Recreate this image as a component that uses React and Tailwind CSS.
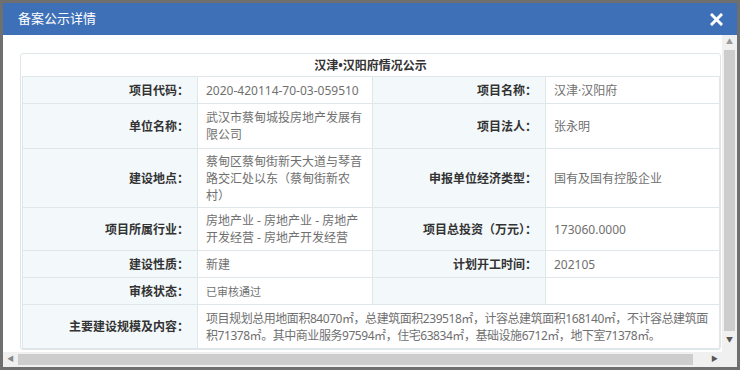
import React from 'react';

const rows = [
  { h: 'h-[27px]', l1: '项目代码：', v1: '2020-420114-70-03-059510', l2: '项目名称：', v2: '汉津·汉阳府' },
  { h: 'h-[45px]', l1: '单位名称：', v1: '武汉市蔡甸城投房地产发展有限公司', l2: '项目法人：', v2: '张永明' },
  { h: 'h-[59px]', l1: '建设地点：', v1: '蔡甸区蔡甸街新天大道与琴音路交汇处以东（蔡甸街新农村）', l2: '申报单位经济类型：', v2: '国有及国有控股企业' },
  { h: 'h-[43px]', l1: '项目所属行业：', v1: '房地产业 - 房地产业 - 房地产开发经营 - 房地产开发经营', l2: '项目总投资（万元）：', v2: '173060.0000' },
  { h: 'h-[27px]', l1: '建设性质：', v1: '新建', l2: '计划开工时间：', v2: '202105' },
  { h: 'h-[27px]', l1: '审核状态：', v1: '已审核通过', small: true, l2: '', v2: '' },
];

const label = 'border border-[#dfe7eb] bg-[#f3f9fb] text-right align-middle pr-[8px] pl-[6px] font-bold text-[#333]';
const value = 'border border-[#dfe7eb] bg-white text-left align-middle pl-[8px] pr-[6px] text-[#707070]';

export default function App() {
  return (
    <div
      className="w-[740px] h-[370px] bg-[#6f6f6f] p-[3px] overflow-hidden"
      style={{ fontFamily: '"Noto Sans", "Noto Sans CJK SC", sans-serif' }}
    >
      <div className="h-[364px] bg-white flex flex-col">
        {/* dialog header */}
        <div className="h-[32px] bg-[#3e70b7] flex items-center justify-between pl-[15px] pr-[14px]">
          <span className="text-white text-[13px]">备案公示详情</span>
          <svg width="13" height="13" viewBox="0 0 13 13">
            <path d="M2 2 L11 11 M11 2 L2 11" stroke="#fff" strokeWidth="3" strokeLinecap="square" />
          </svg>
        </div>

        <div className="flex flex-1">
          <div className="flex-1 flex flex-col">
            <div className="h-[317px] pl-[17px] pt-[18px] pr-[1px] overflow-hidden">
              <div className="w-[701px] border border-[#dfe6ea] rounded-[3px] bg-white text-[12px] leading-[17px]">
                <div className="h-[22px] flex items-center justify-center font-bold text-[#333]">
                  汉津•汉阳府情况公示
                </div>
                <table className="mx-[1px] w-[697px] border-collapse table-fixed">
                  <colgroup>
                    <col className="w-[175px]" />
                    <col className="w-[175px]" />
                    <col className="w-[173px]" />
                    <col className="w-[174px]" />
                  </colgroup>
                  <tbody>
                    {rows.map((r) => (
                      <tr key={r.l1} className={r.h}>
                        <td className={label}>{r.l1}</td>
                        <td className={value}>
                          <span className={r.small ? 'text-[11px]' : ''}>{r.v1}</span>
                        </td>
                        <td className={label}>{r.l2}</td>
                        <td className={value}>{r.v2}</td>
                      </tr>
                    ))}
                    <tr className="h-[44px]">
                      <td className={label}>主要建设规模及内容：</td>
                      <td className={value + ' tracking-[-0.45px]'} colSpan={3}>
                        项目规划总用地面积84070㎡，总建筑面积239518㎡，计容总建筑面积168140㎡，不计容总建筑面积71378㎡。其中商业服务97594㎡，住宅63834㎡，基础设施6712㎡，地下室71378㎡。
                      </td>
                    </tr>
                  </tbody>
                </table>
              </div>
            </div>

            {/* horizontal scrollbar */}
            <div className="h-[15px] bg-[#f0f0f0] flex items-center">
              <div className="w-[15px] flex items-center justify-center text-[#888] text-[7px]">◀</div>
              <div className="h-[11px] w-[675px] bg-[#cdcdcd]" />
              <div className="flex-1" />
              <div className="w-[15px] flex items-center justify-center text-[#555] text-[7px]">▶</div>
            </div>
          </div>

          {/* vertical scrollbar */}
          <div className="w-[15px] bg-[#f0f0f0] flex flex-col items-center">
            <div className="h-[15px] flex items-center justify-center text-[#999] text-[7px]">▲</div>
            <div className="w-[11px] h-[281px] bg-[#cdcdcd]" />
            <div className="h-[15px] mt-[2px] flex items-center justify-center text-[#555] text-[7px]">▼</div>
            <div className="flex-1 w-full bg-[#f0f0f0]" />
          </div>
        </div>
      </div>
    </div>
  );
}
